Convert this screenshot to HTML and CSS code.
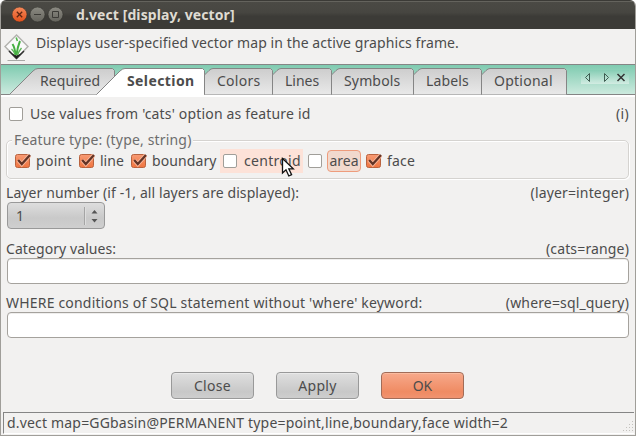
FILE: index.html
```
<!DOCTYPE html>
<html lang="en">
<head>
<meta charset="utf-8">
<title>d.vect [display, vector]</title>
<link rel="stylesheet" href="styles.css">
</head>
<body>
<svg width="0" height="0" class="defs">
  <defs>
    <linearGradient id="tabFill" x1="0" y1="0" x2="0" y2="1"><stop offset="0" stop-color="#cdcdcd"/><stop offset="1" stop-color="#e9e9e9"/></linearGradient>
    <linearGradient id="checkFill" x1="0" y1="0" x2="0" y2="1"><stop offset="0" stop-color="#f79b75"/><stop offset="1" stop-color="#f0743f"/></linearGradient>
    <symbol id="checked" viewBox="0 0 16 16">
      <rect x=".5" y="1.5" width="14" height="13" rx="2" fill="url(#checkFill)" stroke="#b9633f"/>
      <path d="M3.2 7.2 L6.8 11.2 L14.8 2.2" fill="none" stroke="#f9b79b" stroke-width="4"/>
      <path d="M3.2 7 L6.8 11 L15 2" fill="none" stroke="#633426" stroke-width="2.3"/>
    </symbol>
  </defs>
</svg>
<div class="window">
  <header class="titlebar">
    <svg class="controls" width="52" height="16" viewBox="0 0 52 16">
      <defs>
        <linearGradient id="closeFill" x1="0" y1="0" x2="0" y2="1"><stop offset="0" stop-color="#f58a5b"/><stop offset="1" stop-color="#e2501b"/></linearGradient>
        <linearGradient id="grayFill" x1="0" y1="0" x2="0" y2="1"><stop offset="0" stop-color="#8b8a82"/><stop offset="1" stop-color="#65645d"/></linearGradient>
      </defs>
      <circle cx="7.5" cy="7.5" r="7.5" fill="url(#closeFill)" stroke="#33322e" stroke-width=".6"/>
      <circle cx="25.5" cy="7.5" r="7.5" fill="url(#grayFill)" stroke="#33322e" stroke-width=".6"/>
      <circle cx="43.5" cy="7.5" r="7.5" fill="url(#grayFill)" stroke="#33322e" stroke-width=".6"/>
      <path d="M4.8 4.8l5.4 5.4M10.2 4.8l-5.4 5.4" stroke="#5d2512" stroke-width="1.3"/>
      <path d="M22 7.5h7M40.5 4.5h6v6h-6z" fill="none" stroke="#3c3b37"/>
    </svg>
    <h1 class="title">d.vect [display, vector]</h1>
  </header>
  <div class="intro">
    <svg width="25" height="29" viewBox="0 0 25 29">
      <path d="M12.5 2 L24 13.5 L12.5 25.500 L1 13.5Z" fill="#fafafa" stroke="#b2b2ae" stroke-width="1.5"/>
      <path d="M5 18 L12.5 25.500 L20 18" fill="none" stroke="#303030" stroke-width="1.5"/>
      <path d="M8 20.500L12.5 22.500L17 20.500L12.5 25.500Z" fill="#1d221b"/>
      <path d="M11.500 22Q11 15 8.500 11M12.500 22Q13.500 14 16 8" fill="none" stroke="#45b041" stroke-width="2"/>
      <path d="M11 22Q10 18 7.500 16M13.500 22Q15 18 17.500 15" fill="none" stroke="#58b554" stroke-width="1.3"/>
      <path d="M12.200 4.500l1.200 3.500" stroke="#4fb748" stroke-width="1.6"/>
      <path d="M3.5 27.5h17.500" stroke="#a8a8a5"/>
    </svg>
    <span class="t-intro">Displays user-specified vector map in the active graphics frame.</span>
  </div>
  <nav class="tabs">
    <a class="tab required"><svg width="106" height="27"><path d="M.5 26.5L24 3Q26.5 .5 29 .5H103.5L105.5 2.5V26.5" fill="url(#tabFill)" stroke="#858585"/></svg><span>Required</span></a>
    <a class="tab selection"><svg width="109" height="27"><path d="M.5 26.5L24 3Q26.5 .5 29 .5H106.5L108.5 2.5V26.5" fill="#fff" stroke="#858585"/><path d="M1 26.5H108" stroke="#fff"/></svg><span>Selection</span></a>
    <a class="tab colors"><svg width="69" height="27"><path d="M.5 26.5V7L5 2.5Q7 .5 9 .5H66.5L68.5 2.5V26.5" fill="url(#tabFill)" stroke="#858585"/></svg><span>Colors</span></a>
    <a class="tab lines"><svg width="60" height="27"><path d="M.5 26.5V7L5 2.5Q7 .5 9 .5H57.5L59.5 2.5V26.5" fill="url(#tabFill)" stroke="#858585"/></svg><span>Lines</span></a>
    <a class="tab symbols"><svg width="83" height="27"><path d="M.5 26.5V7L5 2.5Q7 .5 9 .5H80.5L82.5 2.5V26.5" fill="url(#tabFill)" stroke="#858585"/></svg><span>Symbols</span></a>
    <a class="tab labels"><svg width="69" height="27"><path d="M.5 26.5V7L5 2.5Q7 .5 9 .5H66.5L68.5 2.5V26.5" fill="url(#tabFill)" stroke="#858585"/></svg><span>Labels</span></a>
    <a class="tab optional"><svg width="86" height="27"><path d="M.5 26.5V7L5 2.5Q7 .5 9 .5H83.5L85.5 2.5V26.5" fill="url(#tabFill)" stroke="#858585"/></svg><span>Optional</span></a>
    <svg class="tabnav" width="48" height="14" viewBox="0 0 48 14"><path d="M8.500 3.500v8L4.500 7.500zM23.500 3.500v8L27.500 7.500z" fill="none" stroke="#3f5d52"/><path d="M36.500 4l7 7M43.500 4l-7 7" stroke="#333" stroke-width="1.5"/></svg>
  </nav>
  <main class="panel">
    <div class="row cats">
      <i class="box"></i><span class="t-use">Use values from 'cats' option as feature id</span><span class="end t-i">(i)</span>
    </div>
    <fieldset class="group">
      <legend><span class="t-legend">Feature type: (type, string)</span></legend>
      <div class="checks">
        <label class="c-point"><svg width="16" height="16"><use href="#checked"/></svg><span>point</span></label>
        <label class="c-line"><svg width="16" height="16"><use href="#checked"/></svg><span>line</span></label>
        <label class="c-boundary"><svg width="16" height="16"><use href="#checked"/></svg><span>boundary</span></label>
        <label class="c-centroid"><i class="box"></i><span>centroid</span></label>
        <label class="c-area"><i class="box"></i><span>area</span></label>
        <label class="c-face"><svg width="16" height="16"><use href="#checked"/></svg><span>face</span></label>
      </div>
    </fieldset>
    <div class="row layer"><span class="t-layer">Layer number (if -1, all layers are displayed):</span><span class="end t-layerk">(layer=integer)</span></div>
    <div class="spin"><span>1</span><svg width="20" height="25"><path d="M.5 4v18" stroke="#a5a5a5"/><path d="M1.5 4v18" stroke="#dedede"/><path d="M7.5 10.5h6l-3-3.5zM7.5 16h6l-3 3.5z" fill="#555"/></svg></div>
    <div class="row category"><span class="t-cat">Category values:</span><span class="end t-catk">(cats=range)</span></div>
    <div class="input"></div>
    <div class="row where"><span class="t-where">WHERE conditions of SQL statement without 'where' keyword:</span><span class="end t-wherek">(where=sql_query)</span></div>
    <div class="input"></div>
    <div class="buttons"><button class="b-close">Close</button><button class="b-apply">Apply</button><button class="ok">OK</button></div>
  </main>
  <footer class="status"><span class="t-status">d.vect map=GGbasin@PERMANENT type=point,line,boundary,face width=2</span>
    <svg width="14" height="14"><path d="M12.5 2v12M9.5 5v9M6.5 8v6M3.5 11v3" stroke="#c4c2be" stroke-dasharray="1 2"/></svg>
  </footer>
  <svg class="cursor" width="14" height="21" viewBox="0 0 14 21"><path d="M1.5 1.5V16L5 12.8L7.8 19L10.6 17.7L7.8 11.8H12.3Z" fill="#fff" stroke="#111" stroke-width="1.3"/></svg>
</div>
</body>
</html>
```
FILE: styles.css
```
* { box-sizing: border-box; }
body { margin: 0; background: #fff; font: 14px/20px "Noto Sans", "Open Sans", sans-serif; color: #4c4c4c; }
.defs { position: absolute; }
svg { display: block; flex: none; }
span { white-space: nowrap; }
.window { position: relative; width: 636px; height: 436px; display: flex; flex-direction: column; background: #f2f1f0; border: 1px solid #a09e99; border-top: 0; border-radius: 6px 6px 0 0; overflow: hidden; }
.titlebar { height: 29px; margin: 0 -1px; display: flex; align-items: center; padding-left: 12px; border-top: 1px solid #3b3a36; box-shadow: inset 0 1px #64635d; background: linear-gradient(#4b4a45, #474641 40%, #3c3b37 55%, #3c3b37); flex: none; }
.title { margin: 0 0 0 12px; font-size: 14px; line-height: 20px; font-weight: 700; color: #dfdbd2; white-space: nowrap; letter-spacing: .09px; }
.intro { height: 35px; display: flex; align-items: flex-start; padding: 4px 0 0 3px; flex: none; }
.intro span { margin: 0 0 0 7px; letter-spacing: .085px; }
.tabs { height: 33px; display: flex; padding: 3px 0 0 8px; border-top: 1px solid #858585; border-bottom: 2px solid #fff; background: linear-gradient(#858585, #858585) 0 100% / 100% 1px no-repeat, linear-gradient(#7fcbb0, #cfebe0); flex: none; }
.tab { position: relative; height: 27px; margin-right: -1px; flex: none; }
.tab svg { position: absolute; left: 0; top: 0; }
.tab span { position: absolute; top: 3px; }
.required { width: 88px; }
.required span { left: 31px; letter-spacing: .08px; }
.selection { width: 109px; font-weight: 700; }
.selection span { left: 31px; letter-spacing: .4px; }
.colors { width: 69px; }
.colors span { left: 13px; letter-spacing: .25px; }
.lines { width: 60px; }
.lines span { left: 13px; }
.symbols { width: 83px; }
.symbols span { left: 13px; letter-spacing: .15px; }
.labels { width: 69px; }
.labels span { left: 13px; letter-spacing: .15px; }
.optional { width: 86px; }
.optional span { left: 13px; letter-spacing: .25px; }
.tabnav { margin: 2px 0 0 15px; background: linear-gradient(#86cdb4, #d2ece2); }
.panel { flex: 1; padding: 7px 6px 0 5px; display: flex; flex-direction: column; }
.row { display: flex; height: 20px; align-items: center; letter-spacing: .15px; flex: none; }
.end { margin-left: auto; }
.box { width: 14px; height: 14px; background: #fff; border: 1px solid #a09e99; border-radius: 2px; flex: none; }
.cats { padding-left: 3px; }
.t-use { margin-left: 7px; letter-spacing: .17px; }
.t-i { letter-spacing: .3px; }
.group { position: relative; margin: 16px 0 0; padding: 0; height: 39px; border: 1px solid #d5d3d0; border-radius: 5px; box-shadow: 1px 1px #fff, inset 1px 1px #fff; flex: none; }
legend { position: absolute; left: 5px; top: -11px; height: 20px; padding: 0 1px 0 2px; background: #f2f1f0; color: #6d6d6d; letter-spacing: .17px; }
.checks { display: flex; height: 24px; margin-top: 8px; padding-left: 8px; }
.checks label { display: flex; align-items: center; flex: none; }
.c-point { width: 64px; letter-spacing: .3px; }
.c-line { width: 52px; }
.c-boundary { width: 89px; letter-spacing: .1px; }
.checks svg + span { margin-left: 5px; }
.c-centroid { width: 83px; padding-left: 3px; background: #fde2d8; letter-spacing: .3px; }
.c-centroid span { margin-left: 7px; }
.c-area { width: 63px; padding-left: 5px; }
.c-area span { margin-left: 5px; width: 34px; height: 22px; line-height: 19px; text-align: center; border: 1px solid #ee9c7c; border-radius: 4px; background: #f1d9cd; }
.c-face { letter-spacing: .2px; }
.layer { margin-top: 4px; }
.t-layer { letter-spacing: .085px; }
.spin { width: 98px; height: 27px; border: 1px solid #999; border-radius: 4px; margin: -1px 0 0 1px; display: flex; justify-content: space-between; align-items: center; padding-left: 8px; background: linear-gradient(#dedede, #c9c9c9 60%, #cfcfcf); flex: none; }
.category { margin-top: 10px; }
.t-cat { letter-spacing: .08px; }
.input { height: 26px; margin: -1px 0 0 1px; background: #fff; border: 1px solid #a5a29d; border-radius: 4px; box-shadow: inset 0 1px #efeeed; flex: none; }
.where { margin-top: 9px; }
.t-where { letter-spacing: .19px; }
.buttons { display: flex; justify-content: center; gap: 22px; margin-top: 34px; }
button { width: 83px; height: 27px; padding: 0; font: inherit; color: #4c4c4c; letter-spacing: .3px; border: 1px solid #999; border-radius: 4px; box-shadow: inset 0 1px #e9e9e9, 0 1px #fff; background: linear-gradient(#dfdfdf, #c8c8c8 75%, #cecece); }
.ok { border-color: #a16c58; letter-spacing: 0; box-shadow: inset 0 1px #fabb9f, 0 1px #fff; background: linear-gradient(#f7a98b, #ef8b63 75%, #f19370); }
.status { height: 22px; margin: 0 1px 1px 2px; padding-left: 3px; display: flex; justify-content: space-between; align-items: flex-end; border: 1px solid #858585; border-width: 1px 0 0 1px; border-bottom: 1px solid #fff; flex: none; }
.t-status { letter-spacing: .18px; }
.cursor { position: absolute; left: 280px; top: 157px; }
```
